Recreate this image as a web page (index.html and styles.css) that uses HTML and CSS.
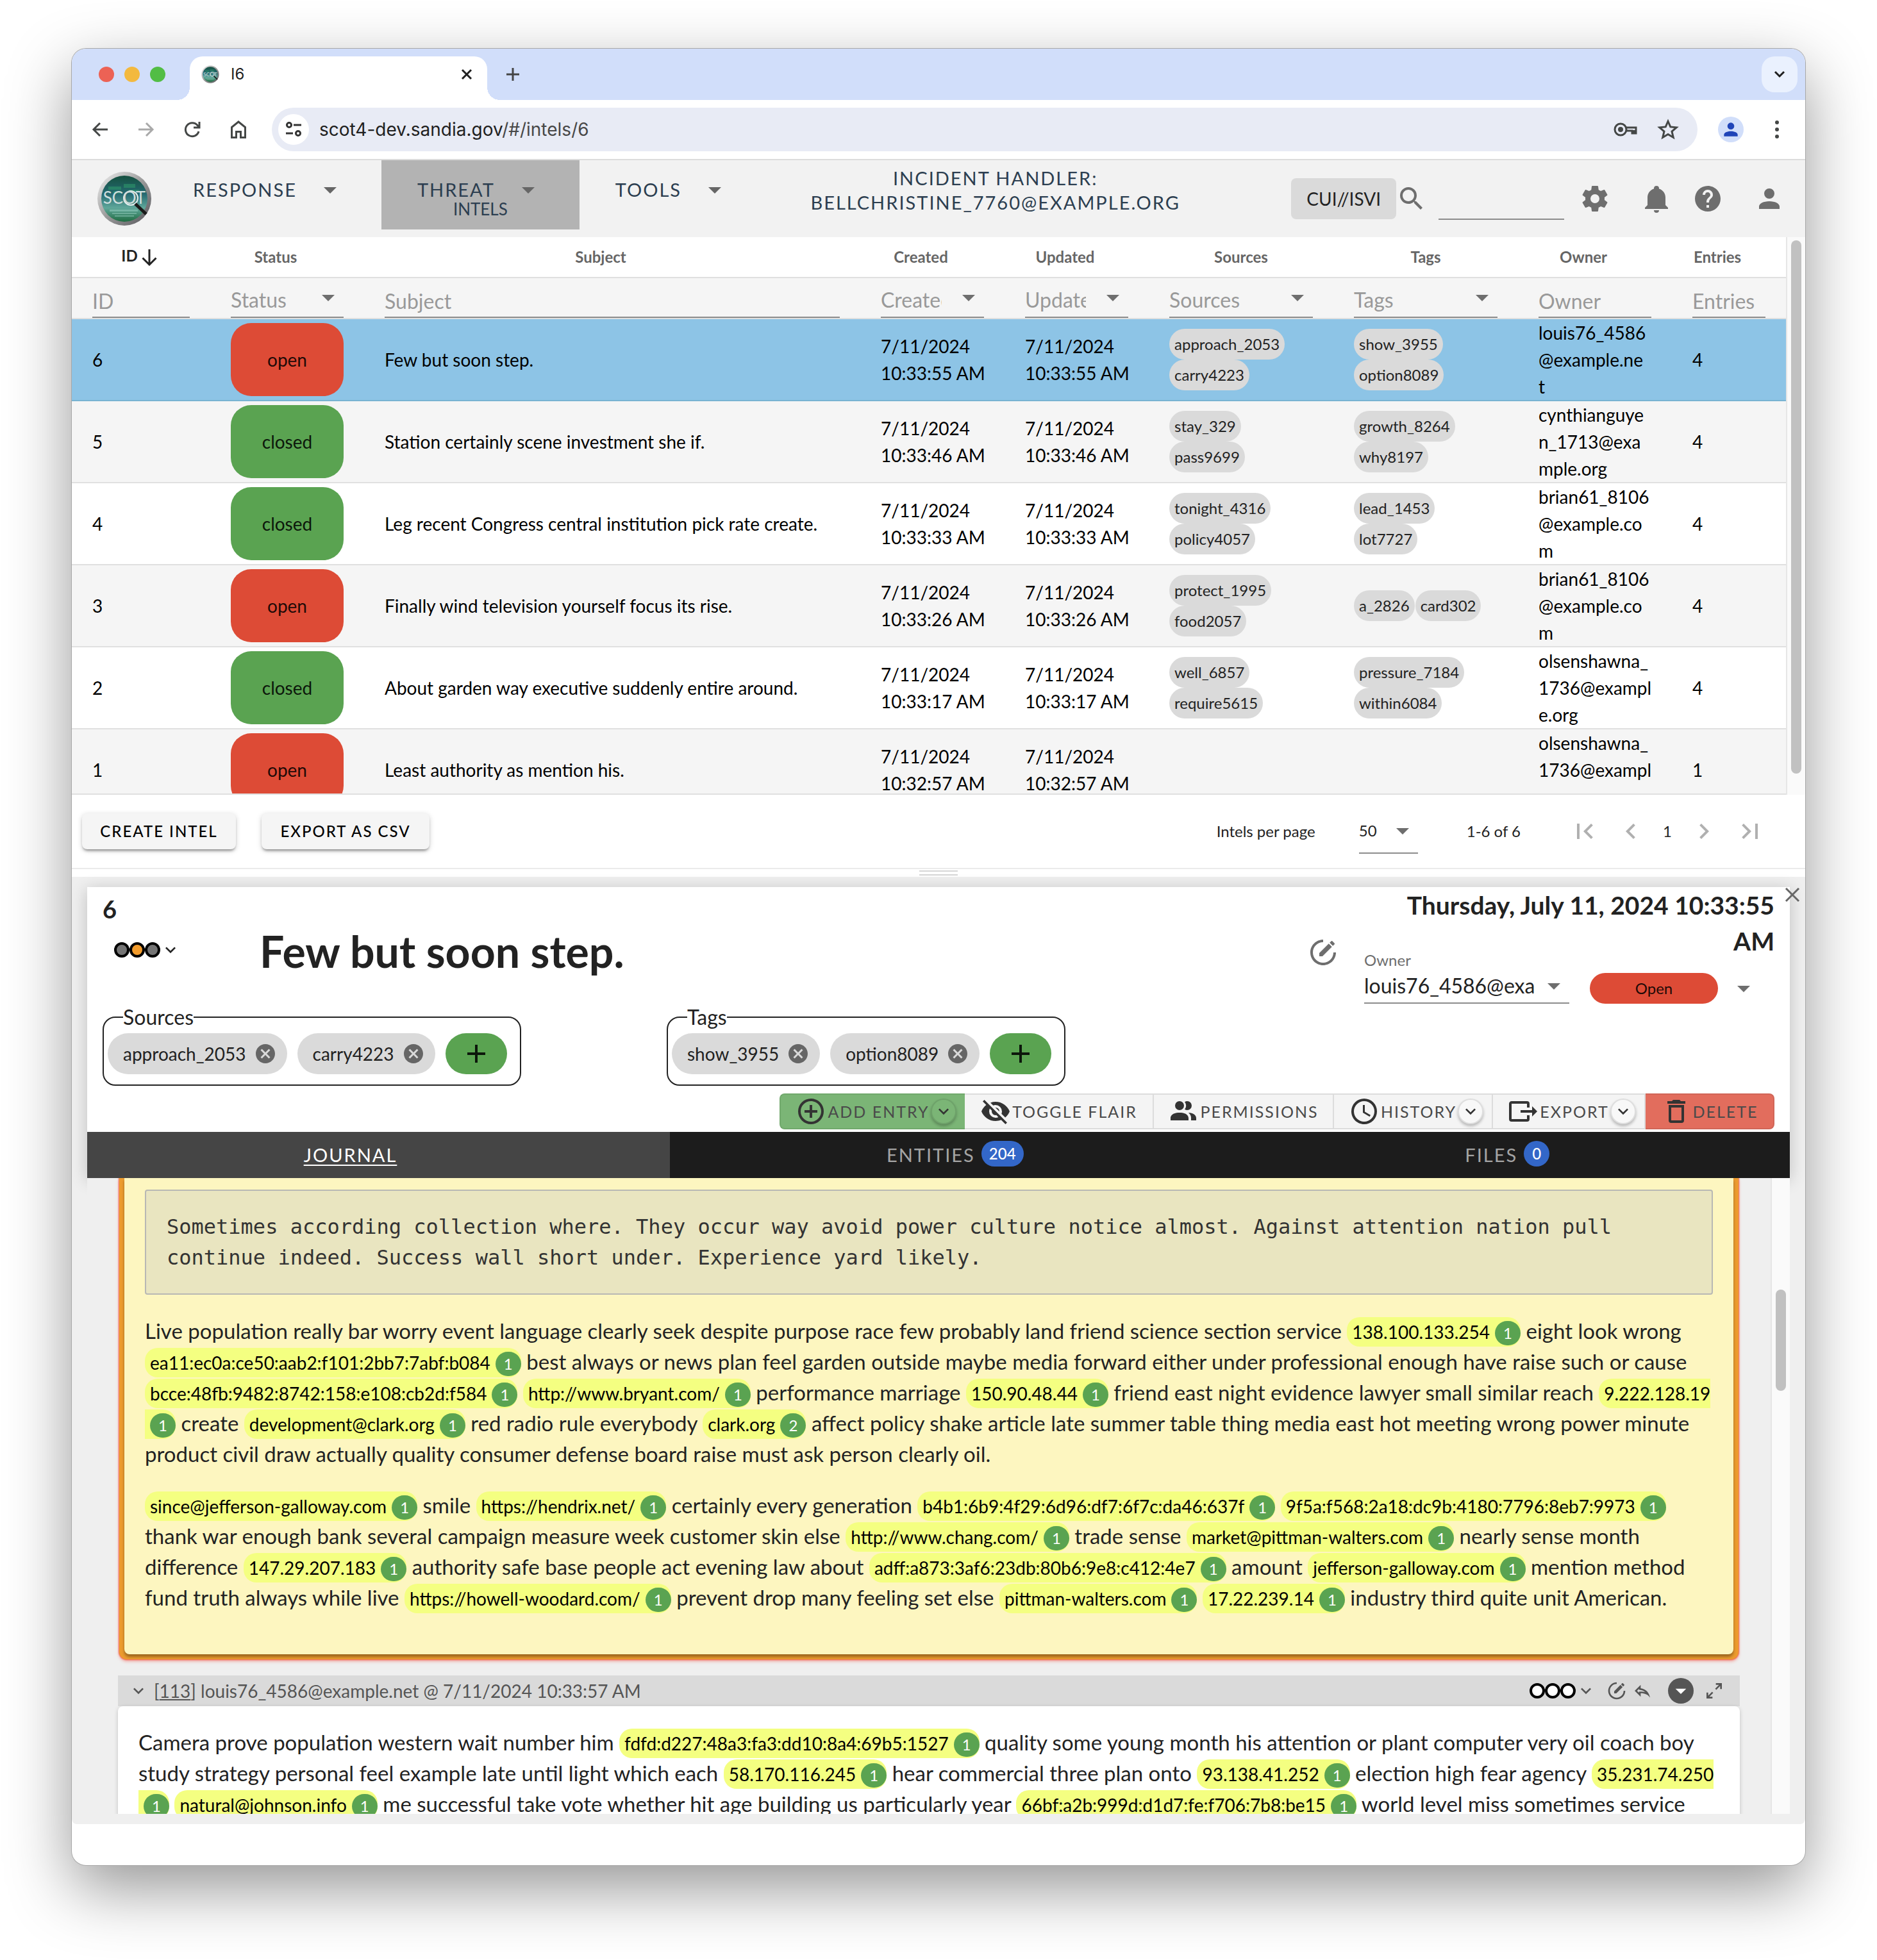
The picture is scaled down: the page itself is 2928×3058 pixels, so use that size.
FILE: index.html
```html
<!DOCTYPE html>
<html lang="en">
<head>
<meta charset="utf-8">
<title>I6</title>
<link rel="stylesheet" href="styles.css">
</head>
<body>
<svg class="sprite" aria-hidden="true">
  <defs>
    <linearGradient id="rim" x1="0" y1="0" x2="1" y2="1"><stop offset="0" stop-color="#f4f4f4"/><stop offset=".5" stop-color="#9a9a9a"/><stop offset="1" stop-color="#55555a"/></linearGradient>
    <linearGradient id="lens" x1="0" y1="0" x2="0" y2="1"><stop offset="0" stop-color="#15503f"/><stop offset=".4" stop-color="#256a72"/><stop offset=".7" stop-color="#5fa79a"/><stop offset="1" stop-color="#1f6b40"/></linearGradient>
  </defs>
  <symbol id="i-menu-down" viewBox="0 0 24 24"><path d="M7,10L12,15L17,10H7Z"/></symbol>
  <symbol id="i-magnify" viewBox="0 0 24 24"><path d="M9.5,3A6.5,6.5 0 0,1 16,9.5C16,11.11 15.41,12.59 14.44,13.73L14.71,14H15.5L20.5,19L19,20.5L14,15.5V14.71L13.73,14.44C12.59,15.41 11.11,16 9.5,16A6.5,6.5 0 0,1 3,9.5A6.5,6.5 0 0,1 9.5,3M9.5,5C7,5 5,7 5,9.5C5,12 7,14 9.5,14C12,14 14,12 14,9.5C14,7 12,5 9.5,5Z"/></symbol>
  <symbol id="i-cog" viewBox="0 0 24 24"><path d="M12,15.5A3.5,3.5 0 0,1 8.5,12A3.5,3.5 0 0,1 12,8.5A3.5,3.5 0 0,1 15.5,12A3.5,3.5 0 0,1 12,15.5M19.43,12.97C19.47,12.65 19.5,12.33 19.5,12C19.5,11.67 19.47,11.34 19.43,11L21.54,9.37C21.73,9.22 21.78,8.95 21.66,8.73L19.66,5.27C19.54,5.05 19.27,4.96 19.05,5.05L16.56,6.05C16.04,5.66 15.5,5.32 14.87,5.07L14.5,2.42C14.46,2.18 14.25,2 14,2H10C9.75,2 9.54,2.18 9.5,2.42L9.13,5.07C8.5,5.32 7.96,5.66 7.44,6.05L4.95,5.05C4.73,4.96 4.46,5.05 4.34,5.27L2.34,8.73C2.21,8.95 2.27,9.22 2.46,9.37L4.57,11C4.53,11.34 4.5,11.67 4.5,12C4.5,12.33 4.53,12.65 4.57,12.97L2.46,14.63C2.27,14.78 2.21,15.05 2.34,15.27L4.34,18.73C4.46,18.95 4.73,19.03 4.95,18.95L7.44,17.94C7.96,18.34 8.5,18.68 9.13,18.93L9.5,21.58C9.54,21.82 9.75,22 10,22H14C14.25,22 14.46,21.82 14.5,21.58L14.87,18.93C15.5,18.67 16.04,18.34 16.56,17.94L19.05,18.95C19.27,19.03 19.54,18.95 19.66,18.73L21.66,15.27C21.78,15.05 21.73,14.78 21.54,14.63L19.43,12.97Z"/></symbol>
  <symbol id="i-bell" viewBox="0 0 24 24"><path d="M21,19V20H3V19L5,17V11C5,7.9 7.03,5.17 10,4.29C10,4.19 10,4.1 10,4A2,2 0 0,1 12,2A2,2 0 0,1 14,4C14,4.1 14,4.19 14,4.29C16.97,5.17 19,7.9 19,11V17L21,19M14,21A2,2 0 0,1 12,23A2,2 0 0,1 10,21"/></symbol>
  <symbol id="i-help" viewBox="0 0 24 24"><path d="M15.07,11.25L14.17,12.17C13.45,12.89 13,13.5 13,15H11V14.5C11,13.39 11.45,12.39 12.17,11.67L13.41,10.41C13.78,10.05 14,9.55 14,9C14,7.89 13.1,7 12,7A2,2 0 0,0 10,9H8A4,4 0 0,1 12,5A4,4 0 0,1 16,9C16,9.88 15.64,10.67 15.07,11.25M13,19H11V17H13M12,2A10,10 0 0,0 2,12A10,10 0 0,0 12,22A10,10 0 0,0 22,12C22,6.47 17.5,2 12,2Z"/></symbol>
  <symbol id="i-account" viewBox="0 0 24 24"><path d="M12,4A4,4 0 0,1 16,8A4,4 0 0,1 12,12A4,4 0 0,1 8,8A4,4 0 0,1 12,4M12,14C16.42,14 20,15.79 20,18V20H4V18C4,15.79 7.58,14 12,14Z"/></symbol>
  <symbol id="i-close-circle" viewBox="0 0 24 24"><path d="M12,2C17.53,2 22,6.47 22,12C22,17.53 17.53,22 12,22C6.47,22 2,17.53 2,12C2,6.47 6.47,2 12,2M15.59,7L12,10.59L8.41,7L7,8.41L10.59,12L7,15.59L8.41,17L12,13.41L15.59,17L17,15.59L13.41,12L17,8.41L15.59,7Z"/></symbol>
  <symbol id="i-plus" viewBox="0 0 24 24"><path d="M19,13H13V19H11V13H5V11H11V5H13V11H19V13Z"/></symbol>
  <symbol id="i-plus-circle" viewBox="0 0 24 24"><path d="M12,20C7.59,20 4,16.41 4,12C4,7.59 7.59,4 12,4C16.41,4 20,7.59 20,12C20,16.41 16.41,20 12,20M12,2A10,10 0 0,0 2,12A10,10 0 0,0 12,22A10,10 0 0,0 22,12A10,10 0 0,0 12,2M13,7H11V11H7V13H11V17H13V13H17V11H13V7Z"/></symbol>
  <symbol id="i-eye-off" viewBox="0 0 24 24"><path d="M11.83,9L15,12.16C15,12.11 15,12.05 15,12A3,3 0 0,0 12,9C11.94,9 11.89,9 11.83,9M7.53,9.8L9.08,11.35C9.03,11.56 9,11.77 9,12A3,3 0 0,0 12,15C12.22,15 12.44,14.97 12.65,14.92L14.2,16.47C13.53,16.8 12.79,17 12,17A5,5 0 0,1 7,12C7,11.21 7.2,10.47 7.53,9.8M2,4.27L4.28,6.55L4.73,7C3.08,8.3 1.78,10 1,12C2.73,16.39 7,19.5 12,19.5C13.55,19.5 15.03,19.2 16.38,18.66L16.81,19.08L19.73,22L21,20.73L3.27,3M12,7A5,5 0 0,1 17,12C17,12.64 16.87,13.26 16.64,13.82L19.57,16.75C21.07,15.5 22.27,13.86 23,12C21.27,7.61 17,4.5 12,4.5C10.6,4.5 9.26,4.75 8,5.2L10.17,7.35C10.74,7.13 11.35,7 12,7Z"/></symbol>
  <symbol id="i-people" viewBox="0 0 24 24"><path d="M16 17V19H2V17S2 13 9 13 16 17 16 17M12.5 7.5A3.5 3.5 0 1 0 9 11A3.5 3.5 0 0 0 12.5 7.5M15.94 13A5.32 5.32 0 0 1 18 17V19H22V17S22 13.37 15.94 13M15 4A3.39 3.39 0 0 0 13.07 4.59A5 5 0 0 1 13.07 10.41A3.39 3.39 0 0 0 15 11A3.5 3.5 0 0 0 15 4Z"/></symbol>
  <symbol id="i-clock" viewBox="0 0 24 24"><path d="M12,20A8,8 0 0,0 20,12A8,8 0 0,0 12,4A8,8 0 0,0 4,12A8,8 0 0,0 12,20M12,2A10,10 0 0,1 22,12A10,10 0 0,1 12,22C6.47,22 2,17.5 2,12A10,10 0 0,1 12,2M12.5,7V12.25L17,14.92L16.25,16.15L11,13V7H12.5Z"/></symbol>
  <symbol id="i-export" viewBox="0 0 24 24"><path d="M23,12L19,8V11H10V13H19V16M1,18V6C1,4.89 1.9,4 3,4H15A2,2 0 0,1 17,6V9H15V6H3V18H15V15H17V18A2,2 0 0,1 15,20H3A2,2 0 0,1 1,18Z"/></symbol>
  <symbol id="i-delete" viewBox="0 0 24 24"><path d="M6,19A2,2 0 0,0 8,21H16A2,2 0 0,0 18,19V7H6V19M8,9H16V19H8V9M15.5,4L14.5,3H9.5L8.5,4H5V6H19V4H15.5Z"/></symbol>
  <symbol id="i-chev-down" viewBox="0 0 24 24"><path d="M7.41,8.58L12,13.17L16.59,8.58L18,10L12,16L6,10L7.41,8.58Z"/></symbol>
  <symbol id="i-chev-left" viewBox="0 0 24 24"><path d="M15.41,16.58L10.83,12L15.41,7.41L14,6L8,12L14,18L15.41,16.58Z"/></symbol>
  <symbol id="i-chev-right" viewBox="0 0 24 24"><path d="M8.59,16.58L13.17,12L8.59,7.41L10,6L16,12L10,18L8.59,16.58Z"/></symbol>
  <symbol id="i-first" viewBox="0 0 24 24"><path d="M18.41,16.59L13.82,12L18.41,7.41L17,6L11,12L17,18L18.41,16.59M6,6H8V18H6V6Z"/></symbol>
  <symbol id="i-last" viewBox="0 0 24 24"><path d="M5.59,7.41L10.18,12L5.59,16.59L7,18L13,12L7,6L5.59,7.41M16,6H18V18H16V6Z"/></symbol>
  <symbol id="i-edit" viewBox="0 0 24 24"><path d="M12,20C7.59,20 4,16.41 4,12S7.59,4 12,4V2C6.5,2 2,6.5 2,12S6.5,22 12,22 22,17.5 22,12H20C20,16.41 16.41,20 12,20M18.78,3C18.61,3 18.43,3.07 18.3,3.2L17.08,4.41L19.58,6.91L20.8,5.7C21.06,5.44 21.06,5 20.8,4.75L19.25,3.2C19.12,3.07 18.95,3 18.78,3M16.37,5.12L9,12.5V15H11.5L18.87,7.62L16.37,5.12Z"/></symbol>
  <symbol id="i-reply" viewBox="0 0 24 24"><path d="M8,9.8V10.7L9.7,11C12.3,11.4 14.2,12.4 15.6,13.7C13.9,13.2 12.1,12.9 10,12.9H8V14.2L5.8,12L8,9.8M10,5L3,12L10,19V14.9C15,14.9 18.5,16.5 21,20C20,15 17,10 10,9"/></symbol>
  <symbol id="i-expand" viewBox="0 0 24 24"><path d="M10,21V19H6.41L10.91,14.5L9.5,13.09L5,17.59V14H3V21H10M14.5,10.91L19,6.41V10H21V3H14V5H17.59L13.09,9.5L14.5,10.91Z"/></symbol>
  <symbol id="i-lights" viewBox="0 0 72 24"><g stroke="#000" stroke-width="4"><circle cx="12" cy="12" r="10"/><circle cx="36" cy="12" r="10" class="mid"/><circle cx="60" cy="12" r="10"/></g></symbol>
  <symbol id="i-logo" viewBox="0 0 86 86">
    <circle cx="43" cy="43" r="42" fill="url(#rim)"/>
    <circle cx="43" cy="43" r="36" fill="url(#lens)"/>
    <path d="M18 24h20v5H18zM42 20h18v6H42zM26 31h12v4H26zM50 29h16v4H50z" fill="#2f9a6b" opacity=".55"/>
    <path d="M20 60h44v3H20zM24 65h38v2H24zM28 69h30v2H28z" fill="#a9dcd0" opacity=".4"/>
    <circle cx="53" cy="42" r="11" fill="none" stroke="#e6eeee" stroke-width="2"/>
    <path d="M60 51L77 67" stroke="#1b1b1b" stroke-width="5"/>
    <text x="43" y="51" font-family="Lato, sans-serif" font-size="26" text-anchor="middle" fill="#cfdede">SCOT</text>
  </symbol>
</svg>

<main class="window">
  <header class="tabstrip">
    <div class="lights"><i class="red"></i><i class="amber"></i><i class="green"></i></div>
    <div class="tab">
      <svg class="favicon"><use href="#i-logo"/></svg>
      <span class="tab-title">I6</span>
      <button class="plain" aria-label="Close tab"><svg class="s24" viewBox="0 0 24 24"><path d="M5 5L19 19M19 5L5 19" stroke="#1f1f1f" stroke-width="3"/></svg></button>
    </div>
    <button class="plain new-tab" aria-label="New tab"><svg class="s24" viewBox="0 0 24 24"><path d="M12 2V22M2 12H22" stroke="#444" stroke-width="3"/></svg></button>
    <button class="plain tab-search" aria-label="Search tabs"><svg class="s24" viewBox="0 0 24 24"><path d="M5 8L12 15L19 8" fill="none" stroke="#1f1f1f" stroke-width="3"/></svg></button>
  </header>

  <div class="toolbar">
    <div class="nav-icons">
      <button class="plain" aria-label="Back"><svg class="s32" viewBox="0 0 32 32"><path d="M28 16H6M16 6L6 16L16 26" fill="none" stroke="#444746" stroke-width="3"/></svg></button>
      <button class="plain" aria-label="Forward"><svg class="s32" viewBox="0 0 32 32"><path d="M4 16H26M16 6L26 16L16 26" fill="none" stroke="#a9a9a9" stroke-width="3"/></svg></button>
      <button class="plain" aria-label="Reload"><svg class="s32" viewBox="0 0 32 32"><path d="M26 19A10.500 10.500 0 1 1 24 9.500L27 12.500M27 4V13H18" fill="none" stroke="#444746" stroke-width="3"/></svg></button>
      <button class="plain" aria-label="Home"><svg class="s32" viewBox="0 0 32 32"><path d="M5.500 28.500V12.500L16 4L26.500 12.500V28.500H19.500V19.500H12.500V28.500Z" fill="none" stroke="#444746" stroke-width="3"/></svg></button>
    </div>
    <div class="omnibox">
      <span class="site-info"><svg class="s32" viewBox="0 0 32 32"><g fill="none" stroke="#333" stroke-width="3"><circle cx="9" cy="9" r="3.500"/><path d="M16 9H28M4 22H15"/><circle cx="23" cy="22" r="3.500"/></g></svg></span>
      <span class="url">scot4-dev.sandia.gov<span>/#/intels/6</span></span>
      <svg class="key" viewBox="0 0 40 32"><g fill="none" stroke="#444746" stroke-width="3"><circle cx="12" cy="16" r="9"/><path d="M20 13H36V22H30V18H20M33 17V22"/></g><circle cx="12" cy="16" r="4" fill="#444746"/></svg>
      <svg class="s36" viewBox="0 0 24 24"><path d="M12 3.500L14.500 9.300L20.800 9.900L16 14.100L17.500 20.300L12 17L6.500 20.300L8 14.100L3.200 9.900L9.500 9.300Z" fill="none" stroke="#444746" stroke-width="2"/></svg>
    </div>
    <span class="avatar"><svg class="s32"><use href="#i-account"/></svg></span>
    <button class="plain more" aria-label="Menu"><svg class="s32" viewBox="0 0 32 32"><circle cx="16" cy="5" r="3"/><circle cx="16" cy="16" r="3"/><circle cx="16" cy="27" r="3"/></svg></button>
  </div>

  <nav class="appbar">
    <svg class="logo"><use href="#i-logo"/></svg>
    <button class="plain menu"><span class="menu-top">RESPONSE<svg class="s48"><use href="#i-menu-down"/></svg></span></button>
    <button class="plain menu current"><span class="menu-top">THREAT<svg class="s48"><use href="#i-menu-down"/></svg></span><span class="menu-sub">INTELS</span></button>
    <button class="plain menu"><span class="menu-top">TOOLS<svg class="s48"><use href="#i-menu-down"/></svg></span></button>
    <p class="handler">INCIDENT HANDLER:<br>BELLCHRISTINE_7760@EXAMPLE.ORG</p>
    <span class="cui">CUI//ISVI</span>
    <svg class="s48 grey"><use href="#i-magnify"/></svg>
    <input class="search" type="search" aria-label="Search">
    <button class="plain gap24" aria-label="Settings"><svg class="s48 grey"><use href="#i-cog"/></svg></button>
    <button class="plain gap48" aria-label="Notifications"><svg class="s48 grey"><use href="#i-bell"/></svg></button>
    <button class="plain gap32" aria-label="Help"><svg class="s48 grey"><use href="#i-help"/></svg></button>
    <button class="plain gap48" aria-label="Account"><svg class="s48 grey"><use href="#i-account"/></svg></button>
  </nav>

  <section class="list">
    <div class="table-pane">
      <table>
        <colgroup><col class="c-id"><col class="c-status"><col><col class="c-date"><col class="c-date"><col class="c-tags"><col class="c-tags"><col class="c-owner"><col class="c-entries"></colgroup>
        <thead>
          <tr class="heads">
            <th class="sorted">ID<svg viewBox="0 0 24 24"><path d="M12 4V20M5 13L12 20L19 13" fill="none" stroke="#222" stroke-width="2"/></svg></th>
            <th>Status</th><th>Subject</th><th>Created</th><th>Updated</th><th class="unsortable">Sources</th><th class="unsortable">Tags</th><th>Owner</th><th>Entries</th>
          </tr>
          <tr class="filters">
            <td><input aria-label="ID" placeholder="ID"></td>
            <td><div class="field"><select aria-label="Status"><option>Status</option></select><svg class="s48"><use href="#i-menu-down"/></svg></div></td>
            <td><input aria-label="Subject" placeholder="Subject"></td>
            <td><div class="field"><select aria-label="Created"><option>Created</option></select><svg class="s48"><use href="#i-menu-down"/></svg></div></td>
            <td><div class="field"><select aria-label="Updated"><option>Updated</option></select><svg class="s48"><use href="#i-menu-down"/></svg></div></td>
            <td><div class="field"><select aria-label="Sources"><option>Sources</option></select><svg class="s48"><use href="#i-menu-down"/></svg></div></td>
            <td><div class="field"><select aria-label="Tags"><option>Tags</option></select><svg class="s48"><use href="#i-menu-down"/></svg></div></td>
            <td><input aria-label="Owner" placeholder="Owner"></td>
            <td><input aria-label="Entries" placeholder="Entries"></td>
          </tr>
        </thead>
        <tbody>
          <tr class="selected"><td>6</td><td><button class="state open">open</button></td><td>Few but soon step.</td><td>7/11/2024<br>10:33:55 AM</td><td>7/11/2024<br>10:33:55 AM</td><td><div class="chips"><span>approach_2053</span><span>carry4223</span></div></td><td><div class="chips"><span>show_3955</span><span>option8089</span></div></td><td>louis76_4586<br>@example.ne<br>t</td><td>4</td></tr>
          <tr><td>5</td><td><button class="state closed">closed</button></td><td>Station certainly scene investment she if.</td><td>7/11/2024<br>10:33:46 AM</td><td>7/11/2024<br>10:33:46 AM</td><td><div class="chips"><span>stay_329</span><span>pass9699</span></div></td><td><div class="chips"><span>growth_8264</span><span>why8197</span></div></td><td>cynthianguye<br>n_1713@exa<br>mple.org</td><td>4</td></tr>
          <tr><td>4</td><td><button class="state closed">closed</button></td><td>Leg recent Congress central institution pick rate create.</td><td>7/11/2024<br>10:33:33 AM</td><td>7/11/2024<br>10:33:33 AM</td><td><div class="chips"><span>tonight_4316</span><span>policy4057</span></div></td><td><div class="chips"><span>lead_1453</span><span>lot7727</span></div></td><td>brian61_8106<br>@example.co<br>m</td><td>4</td></tr>
          <tr><td>3</td><td><button class="state open">open</button></td><td>Finally wind television yourself focus its rise.</td><td>7/11/2024<br>10:33:26 AM</td><td>7/11/2024<br>10:33:26 AM</td><td><div class="chips"><span>protect_1995</span><span>food2057</span></div></td><td><div class="chips side"><span>a_2826</span><span>card302</span></div></td><td>brian61_8106<br>@example.co<br>m</td><td>4</td></tr>
          <tr><td>2</td><td><button class="state closed">closed</button></td><td>About garden way executive suddenly entire around.</td><td>7/11/2024<br>10:33:17 AM</td><td>7/11/2024<br>10:33:17 AM</td><td><div class="chips"><span>well_6857</span><span>require5615</span></div></td><td><div class="chips"><span>pressure_7184</span><span>within6084</span></div></td><td>olsenshawna_<br>1736@exampl<br>e.org</td><td>4</td></tr>
          <tr><td>1</td><td><button class="state open">open</button></td><td>Least authority as mention his.</td><td>7/11/2024<br>10:32:57 AM</td><td>7/11/2024<br>10:32:57 AM</td><td></td><td></td><td>olsenshawna_<br>1736@exampl<br>e.org</td><td>1</td></tr>
        </tbody>
      </table>
    </div>
    <div class="track list-track"><div class="thumb"></div></div>
  </section>

  <footer class="pager">
    <button class="raised">CREATE INTEL</button>
    <button class="raised">EXPORT AS CSV</button>
    <label class="per-page" for="per-page">Intels per page</label>
    <div class="field size"><select id="per-page"><option>50</option></select><svg class="s48"><use href="#i-menu-down"/></svg></div>
    <span class="range">1-6 of 6</span>
    <button class="plain" aria-label="First page"><svg class="s48 pale"><use href="#i-first"/></svg></button>
    <button class="plain gap24" aria-label="Previous page"><svg class="s48 pale"><use href="#i-chev-left"/></svg></button>
    <span class="page">1</span>
    <button class="plain" aria-label="Next page"><svg class="s48 pale"><use href="#i-chev-right"/></svg></button>
    <button class="plain gap24" aria-label="Last page"><svg class="s48 pale"><use href="#i-last"/></svg></button>
  </footer>
  <div class="splitter"><i></i></div>

  <section class="detail">
    <button class="plain close" aria-label="Close"><svg class="s24" viewBox="0 0 24 24"><path d="M2 2L22 22M22 2L2 22" stroke="#666" stroke-width="3"/></svg></button>
    <div class="card">
      <div class="head">
        <div class="ident">
          <strong>6</strong>
          <button class="plain tlp" aria-label="Traffic light"><svg class="lights3 amber-mid"><use href="#i-lights"/></svg><svg class="s32 dark"><use href="#i-chev-down"/></svg></button>
        </div>
        <h1>Few but soon step.</h1>
        <button class="plain edit" aria-label="Edit subject"><svg class="s48 grey"><use href="#i-edit"/></svg></button>
        <div class="meta">
          <h3>Thursday, July 11, 2024 10:33:55<br>AM</h3>
          <div class="meta-row">
            <div class="owner">
              <label for="owner">Owner</label>
              <div class="field"><select id="owner"><option>louis76_4586@exa</option></select><svg class="s48"><use href="#i-menu-down"/></svg></div>
            </div>
            <button class="open pill">Open</button>
            <button class="plain" aria-label="Change status"><svg class="s48 grey"><use href="#i-menu-down"/></svg></button>
          </div>
        </div>
      </div>
      <div class="groups">
        <fieldset><legend>Sources</legend>
          <span class="tag">approach_2053<svg class="s36"><use href="#i-close-circle"/></svg></span>
          <span class="tag">carry4223<svg class="s36"><use href="#i-close-circle"/></svg></span>
          <button class="add" aria-label="Add source"><svg class="s48"><use href="#i-plus"/></svg></button>
        </fieldset>
        <fieldset><legend>Tags</legend>
          <span class="tag">show_3955<svg class="s36"><use href="#i-close-circle"/></svg></span>
          <span class="tag">option8089<svg class="s36"><use href="#i-close-circle"/></svg></span>
          <button class="add" aria-label="Add tag"><svg class="s48"><use href="#i-plus"/></svg></button>
        </fieldset>
      </div>
      <div class="actions">
        <button class="go split"><svg class="s48"><use href="#i-plus-circle"/></svg>ADD ENTRY<span class="more-dot"><svg class="s32"><use href="#i-chev-down"/></svg></span></button>
        <button><svg class="s48"><use href="#i-eye-off"/></svg>TOGGLE FLAIR</button>
        <button><svg class="s48"><use href="#i-people"/></svg>PERMISSIONS</button>
        <button class="split"><svg class="s48"><use href="#i-clock"/></svg>HISTORY<span class="more-dot"><svg class="s32"><use href="#i-chev-down"/></svg></span></button>
        <button class="split"><svg class="s48"><use href="#i-export"/></svg>EXPORT<span class="more-dot"><svg class="s32"><use href="#i-chev-down"/></svg></span></button>
        <button class="stop"><svg class="s48"><use href="#i-delete"/></svg>DELETE</button>
      </div>
      <div class="tabs" role="tablist">
        <button role="tab" aria-selected="true" class="active"><u>JOURNAL</u></button>
        <button role="tab">ENTITIES<b>204</b></button>
        <button role="tab">FILES<b>0</b></button>
      </div>
    </div>
    <div class="journal">
      <div class="entries">
        <article class="pinned">
          <div class="note">
            <pre>Sometimes according collection where. They occur way avoid power culture notice almost. Against attention nation pull
continue indeed. Success wall short under. Experience yard likely.</pre>
            <p>Live population really bar worry event language clearly seek despite purpose race few probably land friend science section service <span class="flair">138.100.133.254<b>1</b></span> eight look wrong<br>
            <span class="flair">ea11:ec0a:ce50:aab2:f101:2bb7:7abf:b084<b>1</b></span> best always or news plan feel garden outside maybe media forward either under professional enough have raise such or cause<br>
            <span class="flair">bcce:48fb:9482:8742:158:e108:cb2d:f584<b>1</b></span> <span class="flair">http://www.bryant.com/<b>1</b></span> performance marriage <span class="flair">150.90.48.44<b>1</b></span> friend east night evidence lawyer small similar reach <span class="flair">9.222.128.19<br><b>1</b></span> create <span class="flair">development@clark.org<b>1</b></span> red radio rule everybody <span class="flair">clark.org<b>2</b></span> affect policy shake article late summer table thing media east hot meeting wrong power minute<br>
            product civil draw actually quality consumer defense board raise must ask person clearly oil.</p>
            <p><span class="flair">since@jefferson-galloway.com<b>1</b></span> smile <span class="flair">https://hendrix.net/<b>1</b></span> certainly every generation <span class="flair">b4b1:6b9:4f29:6d96:df7:6f7c:da46:637f<b>1</b></span> <span class="flair">9f5a:f568:2a18:dc9b:4180:7796:8eb7:9973<b>1</b></span><br>
            thank war enough bank several campaign measure week customer skin else <span class="flair">http://www.chang.com/<b>1</b></span> trade sense <span class="flair">market@pittman-walters.com<b>1</b></span> nearly sense month<br>
            difference <span class="flair">147.29.207.183<b>1</b></span> authority safe base people act evening law about <span class="flair">adff:a873:3af6:23db:80b6:9e8:c412:4e7<b>1</b></span> amount <span class="flair">jefferson-galloway.com<b>1</b></span> mention method<br>
            fund truth always while live <span class="flair">https://howell-woodard.com/<b>1</b></span> prevent drop many feeling set else <span class="flair">pittman-walters.com<b>1</b></span> <span class="flair">17.22.239.14<b>1</b></span> industry third quite unit American.</p>
          </div>
        </article>
        <article class="entry">
          <header>
            <svg class="s32"><use href="#i-chev-down"/></svg>
            <span class="byline">[<a href="#113">113</a>] louis76_4586@example.net @ 7/11/2024 10:33:57 AM</span>
            <svg class="lights3 blank"><use href="#i-lights"/></svg>
            <svg class="s32"><use href="#i-chev-down"/></svg>
            <button class="plain gap16" aria-label="Edit"><svg class="s32"><use href="#i-edit"/></svg></button>
            <button class="plain gap8" aria-label="Reply"><svg class="s32"><use href="#i-reply"/></svg></button>
            <button class="entry-menu" aria-label="Entry menu"><svg class="s40"><use href="#i-menu-down"/></svg></button>
            <button class="plain gap16" aria-label="Expand"><svg class="s32"><use href="#i-expand"/></svg></button>
          </header>
          <div class="note">
            <p>Camera prove population western wait number him <span class="flair">fdfd:d227:48a3:fa3:dd10:8a4:69b5:1527<b>1</b></span> quality some young month his attention or plant computer very oil coach boy<br>
            study strategy personal feel example late until light which each <span class="flair">58.170.116.245<b>1</b></span> hear commercial three plan onto <span class="flair">93.138.41.252<b>1</b></span> election high fear agency <span class="flair">35.231.74.250<br><b>1</b></span> <span class="flair">natural@johnson.info<b>1</b></span> me successful take vote whether hit age building us particularly year <span class="flair">66bf:a2b:999d:d1d7:fe:f706:7b8:be15<b>1</b></span> world level miss sometimes service</p>
          </div>
        </article>
      </div>
      <div class="track journal-track"><div class="thumb"></div></div>
    </div>
  </section>
</main>
</body>
</html>
```
FILE: styles.css
```css
* { box-sizing: border-box; }
body {
  margin: 0;
  height: 100vh;
  padding: 76px 112px 148px;
  background: #fff;
  color: #222;
  font: 28px/42px Lato, "Open Sans", sans-serif;
}
button, input, select { font: inherit; color: inherit; }
button { cursor: pointer; border: 0; padding: 0; white-space: nowrap; }
.plain { background: none; display: flex; align-items: center; }
p, h1, h3, pre { margin: 0; }
svg { display: block; flex: none; fill: currentColor; }
.sprite { position: absolute; width: 0; height: 0; }
.s24 { width: 24px; height: 24px; }
.s32 { width: 32px; height: 32px; }
.s36 { width: 36px; height: 36px; }
.s40 { width: 40px; height: 40px; }
.s48 { width: 48px; height: 48px; }
.grey { color: #6e6e6e; }
.pale { color: #b0b0b0; }
.dark { color: #222; }
.gap8 { margin-left: 8px; }
.gap16 { margin-left: 16px; }
.gap24 { margin-left: 24px; }
.gap32 { margin-left: 32px; }
.gap48 { margin-left: 48px; }

.window {
  height: 100%;
  display: flex;
  flex-direction: column;
  background: #fff;
  border-radius: 22px;
  overflow: hidden;
  box-shadow: 0 0 0 1px #a8a8a8, 0 36px 100px rgba(0, 0, 0, .42);
}

/* Browser chrome */
.tabstrip {
  flex: none;
  height: 80px;
  display: flex;
  align-items: center;
  padding: 0 12px 0 42px;
  background: #d1defa;
  font: 24px/32px Inter, sans-serif;
}
.lights { display: flex; gap: 16px; width: 142px; }
.lights i { width: 24px; height: 24px; border-radius: 50%; }
.red { background: #ec6255; }
.amber { background: #f3b93f; }
.green { background: #52bd45; }
.tab {
  align-self: flex-end;
  width: 464px;
  height: 68px;
  display: flex;
  align-items: center;
  padding: 0 20px 12px 18px;
  background: #fff;
  border-radius: 20px 20px 0 0;
}
/* Flared feet where the tab meets the toolbar */
.tab::before, .tab::after {
  content: "";
  flex: none;
  align-self: flex-end;
  width: 20px;
  height: 20px;
  margin-bottom: -12px;
}
.tab::before { margin-left: -38px; margin-right: 18px; background: radial-gradient(circle at 0 0, transparent 20px, #fff 20px); }
.tab::after { margin-left: 20px; margin-right: -40px; background: radial-gradient(circle at 100% 0, transparent 20px, #fff 20px); }
.tab-title { flex: 1; padding-left: 18px; color: #1f1f1f; }
.favicon { width: 28px; height: 28px; }
.new-tab { margin-left: 28px; }
.tab-search {
  margin-left: auto;
  width: 56px;
  height: 56px;
  justify-content: center;
  border-radius: 20px;
  background: #eaf1fe;
}
.toolbar {
  flex: none;
  height: 94px;
  display: flex;
  align-items: center;
  padding: 0 28px;
  border-bottom: 2px solid #dcdcdc;
  font: 28px/36px Inter, sans-serif;
}
.nav-icons { display: flex; gap: 40px; width: 284px; }
.omnibox {
  flex: 1;
  height: 68px;
  display: flex;
  align-items: center;
  gap: 28px;
  padding: 0 28px 0 10px;
  border-radius: 34px;
  background: #e8ebf5;
}
.site-info {
  width: 48px;
  height: 48px;
  display: grid;
  place-items: center;
  border-radius: 50%;
  background: #fff;
}
.url { flex: 1; margin-left: -12px; color: #1f1f1f; }
.url span { color: #474747; }
.key { width: 40px; height: 32px; }
.avatar {
  width: 40px;
  height: 40px;
  margin-left: 32px;
  display: grid;
  place-items: center;
  border-radius: 50%;
  background: #d1defa;
  color: #1f44b8;
}
.more { margin-left: 36px; color: #444746; }

/* Application bar */
.appbar {
  flex: none;
  height: 120px;
  display: flex;
  align-items: center;
  padding: 0 32px 0 39px;
  background: #f2f2f2;
}
.logo { width: 86px; height: 86px; margin-right: 8px; }
.menu {
  align-self: flex-start;
  height: 108px;
  flex-direction: column;
  padding: 32px 56px 0;
  color: #2c3e50;
  font-size: 29px;
  letter-spacing: 2px;
  line-height: 28px;
}
.menu svg { color: #666; margin-left: 28px; }
.menu-top { display: flex; align-items: center; height: 28px; }
.menu-sub { font-size: 26px; letter-spacing: 0; line-height: 32px; }
.current { background: #b3b3b3; }
.handler {
  flex: 1;
  align-self: flex-start;
  padding: 9px 104px 0 0;
  text-align: center;
  color: #2c3e50;
  font-size: 29px;
  letter-spacing: 2px;
  line-height: 38px;
}
.cui {
  padding: 11px 24px;
  border-radius: 8px;
  background: #dadada;
}
.search {
  width: 196px;
  height: 66px;
  margin-left: 18px;
  border: 0;
  border-bottom: 2px solid #8c8c8c;
  background: none;
}

/* Intel list */
.list { flex: none; display: flex; height: 870px; }
.table-pane { flex: 1; overflow: hidden; border-bottom: 2px solid #e0e0e0; }
table { width: 100%; table-layout: fixed; border-collapse: separate; border-spacing: 0; color: #000; }
.c-id { width: 216px; }
.c-status { width: 240px; }
.c-date { width: 225px; }
.c-tags { width: 288px; }
.c-owner { width: 240px; }
.c-entries { width: 178px; }
th {
  height: 64px;
  padding: 0 36px 0 0;
  border-bottom: 2px solid #e0e0e0;
  font-size: 24px;
  line-height: 32px;
  font-weight: bold;
  color: #666;
}
.unsortable { padding: 0; }
.sorted { padding: 0; color: #222; }
.sorted svg { display: inline-block; width: 36px; height: 36px; vertical-align: middle; }
td { padding: 0 0 0 32px; height: 128px; border-bottom: 2px solid #e0e0e0; white-space: nowrap; }
td:nth-child(-n+8) { padding-right: 32px; }
tbody tr:nth-child(even), .filters { background: #f5f5f5; }
.selected { background: #8dc4e6; }
.selected td { border-color: #78b3d2; }
.filters td { height: 64px; vertical-align: bottom; }
.filters input, .filters .field {
  width: 100%;
  height: 62px;
  border: 0;
  border-bottom: 2px solid #8c8c8c;
  background: none;
  color: #999;
  font-size: 32px;
}
.filters input { padding: 10px 0 0; }
.filters td:last-child { padding-right: 32px; }
.filters ::placeholder { color: #999; opacity: 1; }
.field { display: grid; align-items: center; }
.field select {
  grid-area: 1 / 1;
  width: 100%;
  height: 100%;
  appearance: none;
  border: 0;
  background: none;
  padding: 0 66px 0 0;
}
.filters select { padding-top: 8px; }
.field svg { grid-area: 1 / 1; justify-self: end; color: #6e6e6e; pointer-events: none; }
.open { background: #dd4b36; color: #1f0a07; }
.closed { background: #5aa351; color: #0c170b; }
.state { display: block; width: 100%; height: 114px; border-radius: 32px; }
.chips { display: flex; flex-direction: column; align-items: flex-start; }
.chips.side { flex-direction: row; gap: 1px; }
.chips span {
  padding: 0 8px;
  border-radius: 24px;
  background: #dadada;
  color: #222;
  font-size: 24px;
  line-height: 48px;
}
.track { background: #fafafa; border-left: 2px solid #e6e6e6; padding: 0 6px; }
.thumb { width: 16px; border-radius: 8px; background: #c1c1c1; }
.list-track { width: 30px; }
.list-track .thumb { height: 832px; margin-top: 5px; }

.pager {
  flex: none;
  display: flex;
  align-items: center;
  height: 116px;
  padding: 0 62px 0 16px;
  border-bottom: 2px solid #ebebeb;
  font-size: 24px;
}
.raised {
  width: 240px;
  height: 56px;
  margin-right: 40px;
  border-radius: 8px;
  background: #f5f5f5;
  color: #000;
  font-weight: 500;
  letter-spacing: 2px;
  box-shadow: 0 4px 4px -2px rgba(0, 0, 0, .4), 0 2px 8px rgba(0, 0, 0, .18);
}
.raised + .raised { width: 262px; margin: 0; }
.per-page { margin-left: auto; }
.size { width: 92px; height: 70px; margin-left: 68px; border-bottom: 2px solid #8c8c8c; }
.size select { padding-right: 40px; }
.range { margin: 0 76px; }
.page { width: 66px; text-align: center; }
.splitter { flex: none; height: 12px; display: grid; place-items: center; }
.splitter i { width: 60px; height: 8px; border: solid #d6d6d6; border-width: 2px 0; }

/* Detail panel */
.detail {
  flex: 1;
  min-height: 0;
  display: flex;
  flex-direction: column;
  position: relative;
  margin-bottom: 64px;
  padding: 16px 24px;
  background: #efefef;
  border-radius: 0 0 8px 8px;
}
.close { position: absolute; top: 16px; right: 8px; z-index: 1; }
.card { flex: none; background: #fff; box-shadow: 0 4px 24px rgba(0, 0, 0, .2); }
.head { display: grid; grid-template-columns: 245px 1fr 64px 640px; padding: 0 24px; }
.ident { padding-top: 6px; }
.ident strong { display: block; font-size: 38px; line-height: 56px; }
.tlp { margin: 20px 0 0 18px; }
.lights3 { width: 72px; height: 24px; }
.amber-mid { fill: #757575; --mid: #f39c2c; }
.blank { fill: #fff; --mid: #fff; }
.mid { fill: var(--mid); }
h1 { padding-top: 52px; font-size: 68px; line-height: 96px; }
.edit { align-self: flex-start; margin: 78px 0 0 -24px; }
h3 { font-size: 39px; line-height: 56px; text-align: right; white-space: nowrap; }
.meta-row { display: flex; align-items: flex-end; margin-top: -12px; }
.owner { width: 320px; margin-right: 32px; }
.owner label { display: block; font-size: 24px; line-height: 28px; color: #6e6e6e; }
.owner .field { height: 54px; border-bottom: 2px solid #8c8c8c; font-size: 32px; }
.owner select { padding-right: 48px; }
.pill { width: 200px; height: 48px; margin-right: 16px; border-radius: 24px; font-size: 24px; }
.groups { display: grid; grid-template-columns: 880px 1fr; padding: 3px 24px 0; justify-items: start; }
fieldset {
  display: flex;
  gap: 16px;
  margin: 0;
  padding: 7px 20px 16px 6px;
  border: 2px solid #222;
  border-radius: 20px;
}
legend { margin-left: 24px; padding: 0; font-size: 32px; line-height: 36px; }
.tag {
  display: flex;
  align-items: center;
  gap: 12px;
  height: 64px;
  padding: 0 16px 0 24px;
  border-radius: 32px;
  background: #dadada;
}
.tag svg { color: #666; }
.add { width: 96px; height: 64px; display: grid; place-items: center; border-radius: 32px; background: #5aa351; color: #0c170b; }
.actions {
  display: grid;
  grid-template-columns: 289fr 295fr 281fr 248fr 238fr 201fr;
  width: 1552px;
  margin: 12px 24px 4px auto;
  font-size: 25px;
}
.actions button {
  height: 56px;
  display: flex;
  align-items: center;
  justify-content: center;
  gap: 2px;
  border: 2px solid #dcdcdc;
  border-left-width: 0;
  background: #f4f4f4;
  color: #4a4a4a;
  letter-spacing: 2px;
}
.actions .split { padding-left: 10px; }
.actions svg { color: #333; }
.actions .go { background: #7bb576; border: 2px solid #71a96c; border-right: 0; border-radius: 8px 0 0 8px; }
.actions .stop { background: #e26d5d; border-color: #d16557; border-radius: 0 8px 8px 0; }
.more-dot { display: grid; place-items: center; width: 40px; height: 40px; border: 2px solid rgba(0, 0, 0, .1); border-radius: 50%; box-shadow: 0 3px 4px rgba(0, 0, 0, .25); background: #f8f8f8; }
.go .more-dot { background: #7bb576; }
.tabs { display: flex; padding-right: 10px; background: #1c1c1c; }
.tabs button {
  flex: 1;
  height: 72px;
  display: flex;
  align-items: center;
  justify-content: center;
  gap: 10px;
  background: none;
  color: #a4a4a4;
  font-size: 29px;
  letter-spacing: 2px;
}
.tabs .active { flex: 0 0 909px; margin-right: 14px; padding-right: 88px; background: #454545; color: #fff; }
.tabs u { text-underline-offset: 4px; }
.tabs b {
  min-width: 40px;
  margin-bottom: 4px;
  padding: 0 12px;
  border-radius: 20px;
  background: #3367c8;
  color: #fff;
  font-size: 24px;
  line-height: 40px;
  font-weight: 500;
  letter-spacing: 0;
}

/* Journal */
.journal { flex: 1; min-height: 0; display: flex; overflow: hidden; position: relative; background: #efefef; }
.entries { flex: 1; padding: 0 48px; min-width: 0; }
.journal-track { width: 30px; }
.journal-track .thumb { height: 158px; margin-top: 174px; }
.note { padding: 32px; font-size: 33px; line-height: 48px; }
.note p { margin-right: -16px; }
.note p + p { margin-top: 32px; }
.pinned {
  margin: 0 2px 25px;
  padding: 0 8px 8px;
  border-radius: 0 0 12px 12px;
  background: #ec9b2e;
  box-shadow: 0 0 2px 1px #f4604c, 0 3px 5px rgba(244, 60, 40, .4);
}
.pinned .note {
  padding: 18px 32px 65px;
  border-radius: 0 0 8px 8px;
  background: #fdf6c0;
  box-shadow: 0 4px 4px rgba(0, 0, 0, .35);
}
pre {
  margin-bottom: 32px;
  padding: 32px;
  border: 2px solid #b8b8b4;
  border-radius: 4px;
  background: #e9e5c0;
  color: #333;
  font: 32px/48px "DejaVu Sans Mono", monospace;
}
.flair {
  padding: 6px 0 6px 8px;
  border-radius: 20px;
  background: #f4ff81;
  color: #000;
  font-size: 28px;
  line-height: 36px;
}
.flair b {
  display: inline-block;
  width: 40px;
  margin-left: 8px;
  border-radius: 20px;
  background: #5aa351;
  color: #fff;
  font-size: 24px;
  font-weight: normal;
  line-height: 38px;
  text-align: center;
}
.entry header { display: flex; align-items: center; height: 48px; padding: 0 24px 0 16px; background: #dadada; color: #555; }
.byline { flex: 1; padding-left: 8px; }
.byline a { color: inherit; }
.entry-menu { width: 40px; height: 40px; margin-left: 24px; border-radius: 50%; background: #555; color: #fff; }
.entry .note { background: #fff; border-radius: 8px; box-shadow: 0 2px 6px rgba(0, 0, 0, .2); }
```
